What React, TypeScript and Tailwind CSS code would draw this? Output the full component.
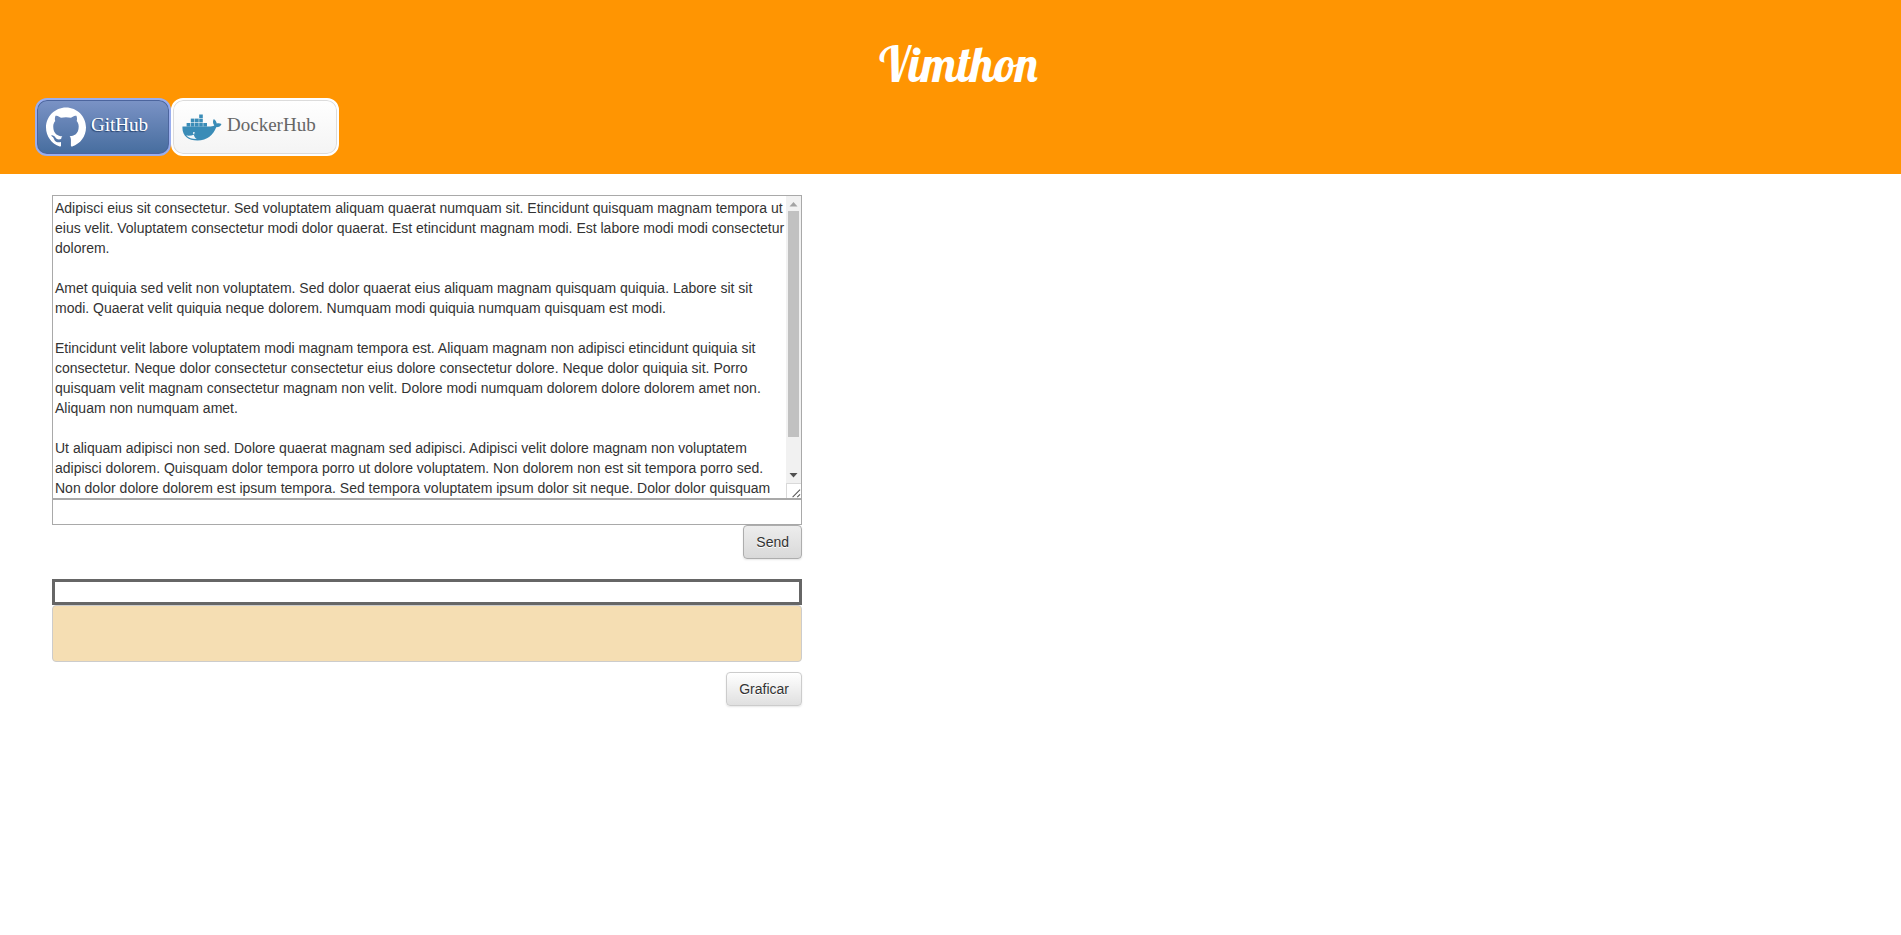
import React from "react";

const OUTPUT_TEXT = `Adipisci eius sit consectetur. Sed voluptatem aliquam quaerat numquam sit. Etincidunt quisquam magnam tempora ut eius velit. Voluptatem consectetur modi dolor quaerat. Est etincidunt magnam modi. Est labore modi modi consectetur dolorem.

Amet quiquia sed velit non voluptatem. Sed dolor quaerat eius aliquam magnam quisquam quiquia. Labore sit sit modi. Quaerat velit quiquia neque dolorem. Numquam modi quiquia numquam quisquam est modi.

Etincidunt velit labore voluptatem modi magnam tempora est. Aliquam magnam non adipisci etincidunt quiquia sit consectetur. Neque dolor consectetur consectetur eius dolore consectetur dolore. Neque dolor quiquia sit. Porro quisquam velit magnam consectetur magnam non velit. Dolore modi numquam dolorem dolore dolorem amet non. Aliquam non numquam amet.

Ut aliquam adipisci non sed. Dolore quaerat magnam sed adipisci. Adipisci velit dolore magnam non voluptatem adipisci dolorem. Quisquam dolor tempora porro ut dolore voluptatem. Non dolorem non est sit tempora porro sed. Non dolor dolore dolorem est ipsum tempora. Sed tempora voluptatem ipsum dolor sit neque. Dolor dolor quisquam est magnam.
`;

function GitHubMark() {
  return (
    <svg viewBox="0 0 24 24" className="size-10 shrink-0" fill="#fff" aria-hidden="true">
      <path d="M12 .297c-6.63 0-12 5.373-12 12 0 5.303 3.438 9.8 8.205 11.385.6.113.82-.258.82-.577 0-.285-.01-1.04-.015-2.04-3.338.724-4.042-1.61-4.042-1.61C4.422 18.07 3.633 17.7 3.633 17.7c-1.087-.744.084-.729.084-.729 1.205.084 1.838 1.236 1.838 1.236 1.07 1.835 2.809 1.305 3.495.998.108-.776.417-1.305.76-1.605-2.665-.3-5.466-1.332-5.466-5.93 0-1.31.465-2.38 1.235-3.22-.135-.303-.54-1.523.105-3.176 0 0 1.005-.322 3.3 1.23.96-.267 1.98-.399 3-.405 1.02.006 2.04.138 3 .405 2.28-1.552 3.285-1.23 3.285-1.23.645 1.653.24 2.873.12 3.176.765.84 1.23 1.91 1.23 3.22 0 4.61-2.805 5.625-5.475 5.92.42.36.81 1.096.81 2.22 0 1.606-.015 2.896-.015 3.286 0 .315.21.69.825.57C20.565 22.092 24 17.592 24 12.297c0-6.627-5.373-12-12-12" />
    </svg>
  );
}

function DockerWhale() {
  return (
    <svg viewBox="0 0 40 27" className="h-[27px] w-10 shrink-0" aria-hidden="true">
      <g fill="#3a8cb7">
        <rect x="17.2" y="0.5" width="3.6" height="3.5" />
        <rect x="8.8" y="4.6" width="3.7" height="3.8" />
        <rect x="13" y="4.6" width="3.7" height="3.8" />
        <rect x="17.2" y="4.6" width="3.6" height="3.8" />
        <rect x="4.6" y="9" width="3.7" height="3.6" />
        <rect x="8.8" y="9" width="3.7" height="3.6" />
        <rect x="13" y="9" width="3.7" height="3.6" />
        <rect x="17.2" y="9" width="3.6" height="3.6" />
        <rect x="21.3" y="9" width="3.7" height="3.6" />
        <path d="M.5 12.400H27c2.200 0 4-.2 5.300-1-1.600-2-1.700-4.100-.5-6.400 1.800 1.200 2.700 2.600 2.900 4.600 1.700-.5 3.300-.3 4.800.4-.9 2.200-2.500 3.100-5.300 3.200C31.400 21 25.300 26.400 15.500 26.400 5.800 26.400-.3 21.400.5 12.400z" />
      </g>
      <path fill="#f4f8fa" d="M4.200 21.600c3.100.4 5.500 0 7.600-.9.500 1.900 1.300 3.300 2.900 4.400-4.300.1-8-.9-10.500-3.500z" />
      <circle cx="12" cy="19.200" r="1.100" fill="#fff" />
      <circle cx="12.300" cy="19.200" r="0.600" fill="#3a8cb7" />
    </svg>
  );
}

function ScrollRail() {
  return (
    <div aria-hidden="true" className="flex w-[15px] shrink-0 flex-col">
      <div className="flex flex-1 flex-col bg-[#f1f1f1]">
        <svg viewBox="0 0 15 15" className="size-[15px]">
          <path d="M3.500 10.500h8L7.500 6z" fill="#a3a3a3" />
        </svg>
        <div className="flex flex-1 flex-col px-[2px]">
          <div className="h-[88%] bg-[#c1c1c1]" />
        </div>
        <svg viewBox="0 0 15 15" className="size-[15px]">
          <path d="M3.500 5h8L7.500 9.500z" fill="#505050" />
        </svg>
      </div>
      <svg viewBox="0 0 15 15" className="size-[15px] border-t border-l border-[#d9d9d9] bg-white">
        <path d="M6 14l8-8M11 14l3-3" fill="none" stroke="#555" strokeWidth="1.100" />
      </svg>
    </div>
  );
}

export default function App() {
  return (
    <div className="min-h-screen bg-white font-['Liberation_Sans',Arial,sans-serif] text-sm leading-5 text-[#333]">
      <header className="bg-[#ff9502] px-[35px] pt-10 pb-[18px]">
        <h1 className="mb-[10px] pl-4 text-center font-['Lobster','Liberation_Serif',serif] text-[48px] leading-12 font-normal text-white">
          Vimthon
        </h1>
        <nav className="flex font-['Liberation_Serif','Times_New_Roman',serif] text-[19px]">
          <a
            href="#github"
            className="flex h-[58px] items-center gap-[5px] rounded-xl border-2 border-[#9aaeee] bg-linear-to-b from-[#7b93c6] to-[#466d9e] pr-[21px] pl-[9px] text-white shadow-[inset_0_0_0_1px_#4c659e] [text-shadow:-1px_1px_1px_#2c4570]"
          >
            <GitHubMark />
            <span className="pb-1">GitHub</span>
          </a>
          <a
            href="#dockerhub"
            className="flex h-[58px] items-center gap-[5px] rounded-xl border-2 border-white bg-linear-to-b from-white to-[#f4f4f4] pr-[21px] pl-[9px] text-[#666] shadow-[inset_0_0_0_1px_#dcdcdc]"
          >
            <DockerWhale />
            <span className="pb-1">DockerHub</span>
          </a>
        </nav>
      </header>

      <main className="pt-[21px] pr-[49px] pl-13">
        <div className="flex w-5/12 flex-col">
          <form className="flex flex-col" onSubmit={(e) => e.preventDefault()}>
            <div className="flex h-[304px] border border-[#a9a9a9] bg-white">
              <textarea
                aria-label="Output"
                defaultValue={OUTPUT_TEXT}
                className="block h-full min-w-0 flex-1 resize-none overflow-y-auto py-[2px] pl-[2px] outline-none [scrollbar-width:none]"
              />
              <ScrollRail />
            </div>
            <input
              type="text"
              aria-label="Message"
              className="h-[26px] w-full border border-[#a9a9a9] bg-white px-[2px] outline-none"
            />
            <button
              type="submit"
              className="h-[34px] self-end rounded-[4px] border border-[#adadad] bg-linear-to-b from-[#ededed] to-[#d9d9d9] px-3 shadow-[0_1px_2px_rgba(0,0,0,0.1)] [text-shadow:0_1px_0_#fff]"
            >
              Send
            </button>
          </form>

          <form className="mt-5 flex flex-col" onSubmit={(e) => e.preventDefault()}>
            <input
              type="text"
              aria-label="Expression"
              className="h-[26px] w-full border-3 border-[#666] bg-white px-1 outline-none"
            />
            <output className="block h-[57px] rounded-[4px] border border-[#ccc] bg-[#f5deb3]" />
            <button
              type="submit"
              className="mt-[10px] h-[34px] self-end rounded-[4px] border border-[#ccc] bg-linear-to-b from-white to-[#e0e0e0] px-3 shadow-[0_1px_2px_rgba(0,0,0,0.1)] [text-shadow:0_1px_0_#fff]"
            >
              Graficar
            </button>
          </form>
        </div>
      </main>
    </div>
  );
}
